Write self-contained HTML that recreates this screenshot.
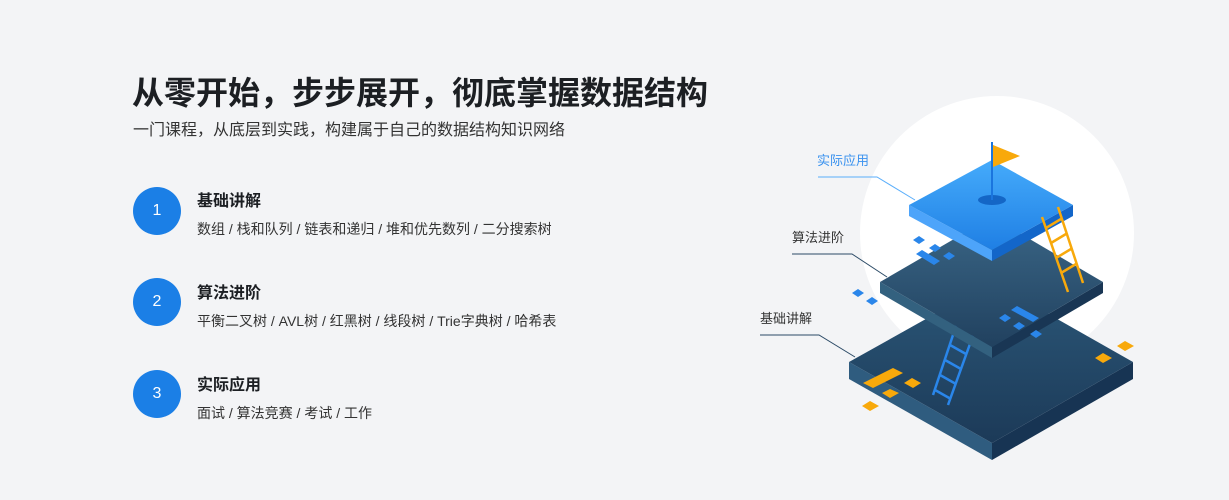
<!DOCTYPE html>
<html><head><meta charset="utf-8"><style>
html,body{margin:0;padding:0}
body{width:1229px;height:500px;background:#f3f4f6;position:relative;overflow:hidden;font-family:"Liberation Sans","Noto Sans CJK SC",sans-serif;}
.t{position:absolute;left:132px;top:68px;font-size:32px;font-weight:bold;color:#1c1f23;white-space:nowrap}
.s{position:absolute;left:133px;top:116px;font-size:16px;color:#333;white-space:nowrap}
.c{position:absolute;left:133px;width:48px;height:48px;border-radius:50%;background:#1b7fe6;color:#fff;font-size:16px;line-height:48px;text-align:center}
.h{position:absolute;left:197px;font-size:16px;font-weight:bold;color:#1c1f23;white-space:nowrap}
.d{position:absolute;left:197px;font-size:14px;color:#333;white-space:nowrap}
svg{position:absolute;left:0;top:0}
</style></head><body>
<div class="t">从零开始，步步展开，彻底掌握数据结构</div>
<div class="s">一门课程，从底层到实践，构建属于自己的数据结构知识网络</div>
<div class="c" style="top:187px">1</div>
<div class="h" style="top:187px">基础讲解</div>
<div class="d" style="top:219px">数组 / 栈和队列 / 链表和递归 / 堆和优先数列 / 二分搜索树</div>
<div class="c" style="top:278px">2</div>
<div class="h" style="top:279px">算法进阶</div>
<div class="d" style="top:311px">平衡二叉树 / AVL树 / 红黑树 / 线段树 / Trie字典树 / 哈希表</div>
<div class="c" style="top:370px">3</div>
<div class="h" style="top:371px">实际应用</div>
<div class="d" style="top:403px">面试 / 算法竞赛 / 考试 / 工作</div>
<svg width="1229" height="500" viewBox="0 0 1229 500">
<defs>
<linearGradient id="gd" x1="0" y1="0" x2="0" y2="1"><stop offset="0" stop-color="#2b5778"/><stop offset="1" stop-color="#1c3a58"/></linearGradient>
<linearGradient id="gm" x1="0" y1="0" x2="0" y2="1"><stop offset="0" stop-color="#3a6686"/><stop offset="1" stop-color="#21415f"/></linearGradient>
<linearGradient id="gt" x1="0" y1="0" x2="0" y2="1"><stop offset="0" stop-color="#45abfb"/><stop offset="1" stop-color="#1f7fe4"/></linearGradient>
</defs>
<circle cx="997" cy="233" r="137" fill="#fff"/>
<polygon points="849,362 992,443 992,460 849,379" fill="#2f5c7f"/>
<polygon points="992,443 1133,362 1133,379 992,460" fill="#173453"/>
<polygon points="849,362 992,282 1133,362 992,443" fill="url(#gd)"/>
<g fill="#f8a90b">
<polygon points="863,383 893,368 903,373 873,388"/>
<polygon points="904,383 912,378 921,383 913,388"/>
<polygon points="882,393 890,389 899,393 890,398"/>
<polygon points="862,406 870,401 879,406 870,411"/>
<polygon points="1095,358 1103,353 1112,358 1103,363"/>
<polygon points="1117,346 1125,341 1134,346 1125,351"/>
</g>
<g stroke="#2a86ea" stroke-width="2.5" fill="none">
<line x1="958" y1="320" x2="933" y2="395"/><line x1="975" y1="330" x2="948" y2="405"/>
<line x1="955" y1="330" x2="971" y2="339"/><line x1="950" y1="345" x2="966" y2="354"/><line x1="945" y1="360" x2="961" y2="369"/><line x1="940" y1="375" x2="956" y2="384"/><line x1="935" y1="390" x2="951" y2="399"/>
</g>
<polygon points="880,282 992,347 992,358 880,293" fill="#33617f"/>
<polygon points="992,347 1103,282 1103,293 992,358" fill="#193654"/>
<polygon points="880,282 992,217 1103,282 992,347" fill="url(#gm)"/>
<g fill="#2a86ea">
<polygon points="913,240 919,236 925,240 919,244"/>
<polygon points="929,248 935,244 941,248 935,252"/>
<polygon points="943,256 949,252 955,256 949,260"/>
<polygon points="916,254 922,250 940,261 934,265"/>
<polygon points="852,293 858,289 864,293 858,297"/>
<polygon points="866,301 872,297 878,301 872,305"/>
<polygon points="999,318 1005,314 1011,318 1005,322"/>
<polygon points="1013,326 1019,322 1025,326 1019,330"/>
<polygon points="1030,334 1036,330 1042,334 1036,338"/>
<polygon points="1011,310 1017,306 1039,318 1033,322"/>
</g>
<polygon points="909,205 992,250 992,261 909,216" fill="#4da4fa"/>
<polygon points="992,250 1073,205 1073,216 992,261" fill="#1366c9"/>
<polygon points="909,205 992,160 1073,205 992,250" fill="url(#gt)"/>
<ellipse cx="992" cy="200" rx="14" ry="5" fill="#1466c6"/>
<line x1="992" y1="142" x2="992" y2="200" stroke="#1a75de" stroke-width="2"/>
<polygon points="993,145 1020,156 993,167" fill="#f8a90b"/>
<g stroke="#f8a90b" stroke-width="2.5" fill="none">
<line x1="1042" y1="217" x2="1068" y2="292"/><line x1="1058" y1="207" x2="1083" y2="283"/>
<line x1="1046" y1="228" x2="1061" y2="219"/><line x1="1051" y1="243" x2="1066" y2="234"/><line x1="1056" y1="258" x2="1071" y2="249"/><line x1="1061" y1="273" x2="1076" y2="264"/>
</g>
<polyline points="818,177 877,177 915,200" fill="none" stroke="#5aaefb" stroke-width="1"/>
<polyline points="792,254 852,254 887,277" fill="none" stroke="#2b4a66" stroke-width="1"/>
<polyline points="760,335 819,335 855,357" fill="none" stroke="#2b4a66" stroke-width="1"/>
<text x="817" y="165" font-size="13" fill="#3a92ef" font-family="Liberation Sans,Noto Sans CJK SC,sans-serif">实际应用</text>
<text x="792" y="242" font-size="13" fill="#333" font-family="Liberation Sans,Noto Sans CJK SC,sans-serif">算法进阶</text>
<text x="760" y="323" font-size="13" fill="#333" font-family="Liberation Sans,Noto Sans CJK SC,sans-serif">基础讲解</text>
</svg>
</body></html>
